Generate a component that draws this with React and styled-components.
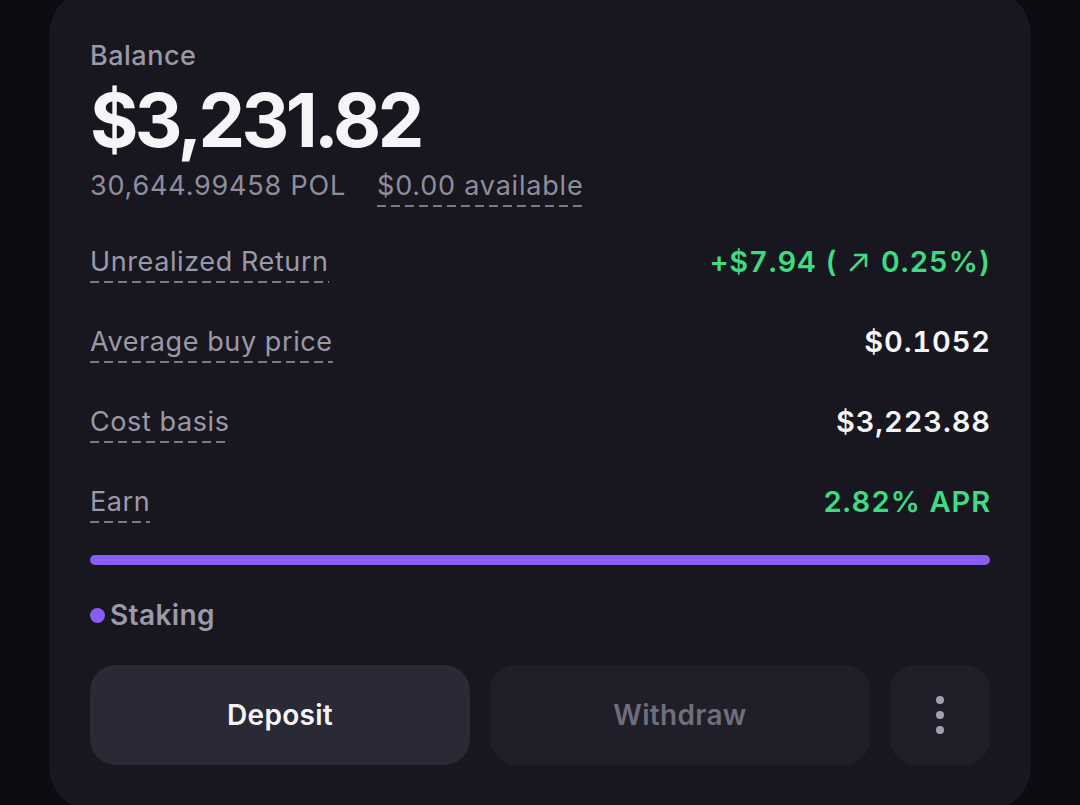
import React from 'react'
import styled, { createGlobalStyle } from 'styled-components'

const GlobalStyle = createGlobalStyle`
  html, body {
    margin: 0;
    background: #0d0c13;
    font-family: Inter, "Noto Sans", sans-serif;
    -webkit-font-smoothing: antialiased;
  }
  body { overflow: hidden; }
`

const rows = [
  { label: 'Unrealized Return', value: 'return', tone: 'green' },
  { label: 'Average buy price', value: '$0.1052', tone: 'white' },
  { label: 'Cost basis', value: '$3,223.88', tone: 'white' },
  { label: 'Earn', value: '2.82% APR', tone: 'green' },
]

const UpRight = () => (
  <ArrowSvg width="24" height="22" viewBox="0 0 24 22" fill="none">
    <path d="M4 19 L19 4 M8 4 H19 V15" stroke="currentColor" strokeWidth="2.6" strokeLinecap="round" strokeLinejoin="round" />
  </ArrowSvg>
)

const App = () => {
  return (
    <Page>
      <GlobalStyle />
      <Card>
        <Label>Balance</Label>
        <Amount>$3,231.82</Amount>
        <SubLine>
          <span>30,644.99458 POL</span>
          <Dashed>$0.00 available</Dashed>
        </SubLine>

        <Rows>
          {rows.map((r) => (
            <Row key={r.label}>
              <RowLabel>
                <Dashed>{r.label}</Dashed>
              </RowLabel>
              <Value $tone={r.tone}>
                {r.value === 'return' ? (
                  <>
                    +$7.94 ( <UpRight /> 0.25%)
                  </>
                ) : (
                  r.value
                )}
              </Value>
            </Row>
          ))}
        </Rows>

        <Bar />

        <Legend>
          <Dot />
          Staking
        </Legend>

        <Actions>
          <ActionButton $primary>Deposit</ActionButton>
          <ActionButton>Withdraw</ActionButton>
          <MoreButton aria-label="More">
            <span />
            <span />
            <span />
          </MoreButton>
        </Actions>
      </Card>
    </Page>
  )
}

const Page = styled.div`
  height: 805px;
  padding: 0 50px;
  box-sizing: border-box;
  overflow: hidden;
`

const Card = styled.section`
  margin-top: -8px;
  background: #18171f;
  border: 1px solid rgba(255, 255, 255, 0.025);
  border-radius: 40px;
  padding: 47px 39px 43px;
  display: flex;
  flex-direction: column;
`

const Label = styled.div`
  font-size: 27px;
  line-height: 32px;
  font-weight: 500;
  color: #9b99a9;
  letter-spacing: 0.5px;
`

const Amount = styled.div`
  margin-top: 8px;
  font-size: 74px;
  line-height: 80px;
  font-weight: 700;
  color: #f5f5f7;
  letter-spacing: -3.6px;
`

const SubLine = styled.div`
  margin-top: 10px;
  display: flex;
  gap: 31px;
  font-size: 27px;
  line-height: 32px;
  color: #8f8d9d;
  letter-spacing: 0.8px;
`

const Dashed = styled.span`
  padding-bottom: 5px;
  background-image: linear-gradient(to right, #7a788c 0 9px, transparent 9px 14px);
  background-size: 14px 2px;
  background-repeat: repeat-x;
  background-position: 0 100%;
`

const Rows = styled.div`
  margin-top: 15px;
  display: flex;
  flex-direction: column;
`

const Row = styled.div`
  height: 80px;
  display: flex;
  align-items: center;
  justify-content: space-between;
`

const RowLabel = styled.div`
  font-size: 27px;
  line-height: 32px;
  color: #9b99a9;
  letter-spacing: 0.6px;
`

const Value = styled.div`
  display: flex;
  align-items: center;
  white-space: pre;
  margin-right: -1px;
  font-size: 29px;
  line-height: 32px;
  font-weight: 600;
  letter-spacing: 0.9px;
  font-variant-numeric: tabular-nums;
  color: ${(p) => (p.$tone === 'green' ? '#3ddc84' : '#f5f5f7')};
`

const ArrowSvg = styled.svg`
  margin: 0 1px;
`

const Bar = styled.div`
  margin-top: 13px;
  height: 10px;
  border-radius: 5px;
  background: #8a5cf6;
`

const Legend = styled.div`
  margin-top: 34px;
  display: flex;
  align-items: center;
  gap: 5px;
  font-size: 28px;
  line-height: 32px;
  font-weight: 600;
  color: #9b99a9;
  letter-spacing: 0.4px;
`

const Dot = styled.span`
  width: 15px;
  height: 15px;
  border-radius: 50%;
  background: #8a5cf6;
`

const Actions = styled.div`
  margin-top: 34px;
  display: grid;
  grid-template-columns: 1fr 1fr 100px;
  gap: 20px;
`

const ActionButton = styled.button`
  height: 100px;
  border: none;
  border-radius: 26px;
  font-family: inherit;
  font-size: 28px;
  font-weight: 600;
  letter-spacing: 0.3px;
  background: ${(p) => (p.$primary ? '#2a2a36' : '#1f1e29')};
  color: ${(p) => (p.$primary ? '#f5f5f7' : '#6f6e7c')};
  cursor: pointer;
`

const MoreButton = styled.button`
  height: 100px;
  border: none;
  border-radius: 26px;
  background: #1f1e29;
  display: flex;
  flex-direction: column;
  align-items: center;
  justify-content: center;
  gap: 7px;
  cursor: pointer;

  span {
    width: 8px;
    height: 8px;
    border-radius: 50%;
    background: #a3a1b1;
  }
`

export default App
